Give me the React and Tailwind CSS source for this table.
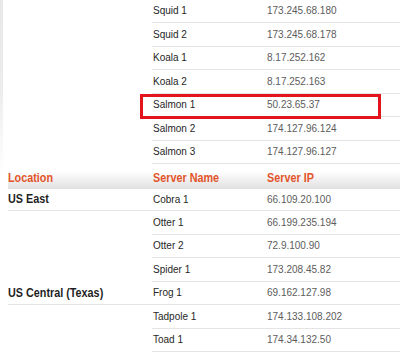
const topRows = [
  ['Squid 1', '173.245.68.180'],
  ['Squid 2', '173.245.68.178'],
  ['Koala 1', '8.17.252.162'],
  ['Koala 2', '8.17.252.163'],
  ['Salmon 1', '50.23.65.37', true],
  ['Salmon 2', '174.127.96.124'],
  ['Salmon 3', '174.127.96.127'],
]

const bottomRows = [
  ['US East', 'Cobra 1', '66.109.20.100'],
  ['', 'Otter 1', '66.199.235.194'],
  ['', 'Otter 2', '72.9.100.90'],
  ['', 'Spider 1', '173.208.45.82'],
  ['US Central (Texas)', 'Frog 1', '69.162.127.98'],
  ['', 'Tadpole 1', '174.133.108.202'],
  ['', 'Toad 1', '174.34.132.50'],
]

// no narrow face installed, so squeeze the bold face to an Arial Narrow width
function Narrow({ children }) {
  return (
    <span className="inline-block origin-left scale-x-[0.8] whitespace-nowrap text-[13.5px] font-bold">
      {children}
    </span>
  )
}

function Row({ location, name, ip, highlight, first }) {
  return (
    <div className={`relative grid grid-cols-[144px_114px_1fr] ${first ? 'h-[22px]' : 'h-[23.5px]'}`}>
      <div className={`flex items-center ${location ? 'border-b border-[#e4e4e4]' : ''}`}>
        {location && <span className="text-[#1f1f1f]"><Narrow>{location}</Narrow></span>}
      </div>
      <div className="flex items-center border-b border-[#e4e4e4] pl-px text-[#262626]">{name}</div>
      <div className="flex items-center border-b border-[#e4e4e4] pl-px text-[#5c5c5c]">{ip}</div>
      {highlight && (
        <div className="absolute left-[132px] top-0 h-[25px] w-[241px] border-[3px] border-[#e3141b]" />
      )}
    </div>
  )
}

export default function App() {
  return (
    <div className="flex h-[352px] w-[400px] overflow-hidden bg-white font-['Liberation_Sans',Arial,sans-serif] text-[10px]">
      <div className="h-[175px] w-[3px] shrink-0 bg-linear-to-b from-[#e8e8e8] via-[#ececec] to-white" />
      <div className="-mt-[0.5px] flex-1 pl-[5px]">
        {topRows.map(([name, ip, hl]) => (
          <Row key={name} name={name} ip={ip} highlight={hl} />
        ))}

        <div className="grid h-[25px] grid-cols-[144px_114px_1fr] bg-linear-to-b from-white from-30% to-[#e0e0e0] pt-1 text-[#e2552a]">
          <div className="flex items-center"><Narrow>Location</Narrow></div>
          <div className="flex items-center pl-px"><Narrow>Server Name</Narrow></div>
          <div className="flex items-center pl-px"><Narrow>Server IP</Narrow></div>
        </div>

        {bottomRows.map(([loc, name, ip], i) => (
          <Row key={name} location={loc} name={name} ip={ip} first={i === 0} />
        ))}
      </div>
    </div>
  )
}
